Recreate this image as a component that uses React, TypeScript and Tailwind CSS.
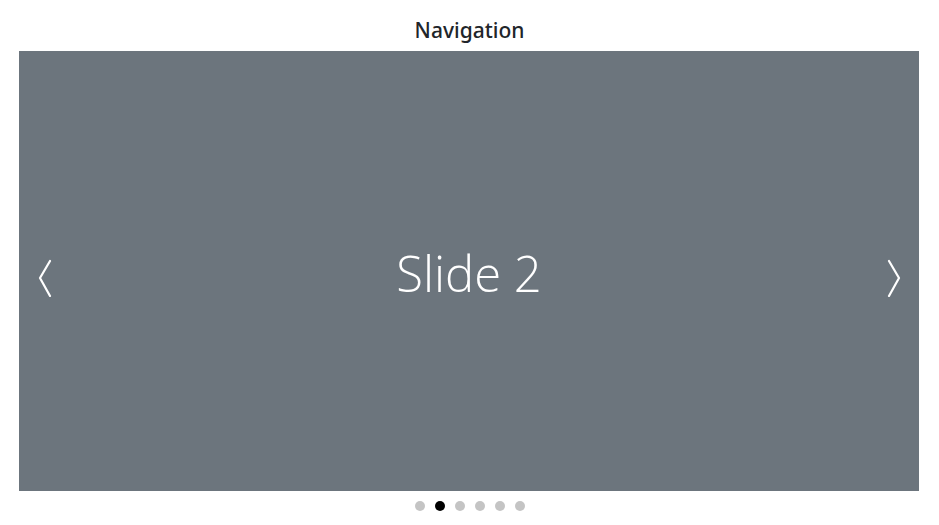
import { useState } from 'react';

const slides = ['Slide 1', 'Slide 2', 'Slide 3', 'Slide 4', 'Slide 5', 'Slide 6'];

export default function App() {
  const [index, setIndex] = useState(1);

  const prev = () => setIndex((i) => (i - 1 + slides.length) % slides.length);
  const next = () => setIndex((i) => (i + 1) % slides.length);

  return (
    <div className="w-[939px] h-[525px] bg-white font-['Open_Sans',sans-serif]">
      <h2 className="pt-[16px] pb-[7px] text-center text-[21px] leading-[28px] font-medium text-[#212529] font-['Noto_Sans',sans-serif]">
        Navigation
      </h2>
      <div className="pl-[19px] pr-[20px]">
        <div className="relative flex h-[440px] items-center justify-center bg-[#6c757d]">
          <button onClick={prev} className="absolute left-[15px] top-[204px] p-1">
            <svg width="14" height="38" viewBox="0 0 14 38" fill="none">
              <path d="M12 2 L2 19 L12 37" stroke="white" strokeWidth="2.2" strokeLinecap="round" strokeLinejoin="round" />
            </svg>
          </button>
          <span className="text-[49px] font-light text-white leading-none mt-[4px]">{slides[index]}</span>
          <button onClick={next} className="absolute right-[14px] top-[204px] p-1">
            <svg width="14" height="38" viewBox="0 0 14 38" fill="none">
              <path d="M2 2 L12 19 L2 37" stroke="white" strokeWidth="2.2" strokeLinecap="round" strokeLinejoin="round" />
            </svg>
          </button>
        </div>
      </div>
      <div className="mt-[10px] flex justify-center gap-[10px]">
        {slides.map((s, i) => (
          <button
            key={s}
            onClick={() => setIndex(i)}
            className={`h-[10px] w-[10px] rounded-full ${i === index ? 'bg-black' : 'bg-[#c4c4c4]'}`}
          />
        ))}
      </div>
    </div>
  );
}
